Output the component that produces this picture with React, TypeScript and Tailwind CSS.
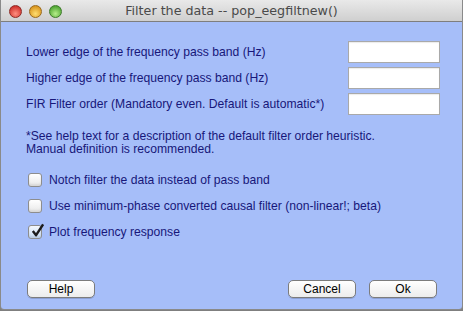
import { useState } from "react";

function TrafficLight({ from, to, ring }: { from: string; to: string; ring: string }) {
  return (
    <span
      className="block h-[13px] w-[13px] rounded-full border"
      style={{ background: `radial-gradient(circle at 50% 70%, ${to} 0%, ${from} 90%)`, borderColor: ring }}
    />
  );
}

function Field({ label }: { label: string }) {
  return (
    <div className="flex h-[22px] items-center justify-between">
      <span>{label}</span>
      <input className="h-[22px] w-[92px] border border-[#a9a9a9] bg-white shadow-[inset_0_1px_1px_rgba(0,0,0,0.08)] outline-none" />
    </div>
  );
}

function Check({ label, initial }: { label: string; initial: boolean }) {
  const [checked, setChecked] = useState(initial);
  return (
    <label className="flex h-[14px] cursor-default items-center gap-[7px]">
      <span
        onClick={() => setChecked(!checked)}
        className={
          "relative block h-[14px] w-[14px] rounded-[3px] border border-[#8d8d8d] shadow-[inset_0_-2px_2px_rgba(0,0,0,0.08)] " +
          (checked ? "bg-gradient-to-b from-[#f4f8fd] to-[#c8dcf4]" : "bg-gradient-to-b from-white to-[#e8e8e8]")
        }
      >
        {checked ? (
          <svg viewBox="0 0 16 16" className="absolute left-[1px] top-[-3px] h-[15px] w-[15px]">
            <path d="M3 8.5 L6.5 13 L14 1.5" fill="none" stroke="#1c1c1c" strokeWidth="2.6" strokeLinejoin="round" />
          </svg>
        ) : null}
      </span>
      <span>{label}</span>
    </label>
  );
}

function Button({ label }: { label: string }) {
  return (
    <button className="h-[18px] w-[68px] rounded-[5px] border border-[#7c7c7c] bg-gradient-to-b from-white to-[#ececec] text-[12px] leading-[16px] text-black shadow-[0_1px_0_rgba(0,0,0,0.15)]">
      {label}
    </button>
  );
}

export default function App() {
  return (
    <div className="h-[311px] w-[463px] bg-[#7f7f7f] font-['Liberation_Sans',Arial,sans-serif]">
      <div className="flex h-[310px] w-[463px] flex-col overflow-hidden rounded-b-[4px] border-x border-b border-[#8a8a8a]">
        <div className="relative flex h-[22px] shrink-0 items-center border-b border-[#7e7e7e] bg-gradient-to-b from-[#e9e9e9] to-[#cfcfcf]">
          <div className="absolute left-[8px] top-[5px] flex gap-[7px]">
            <TrafficLight from="#c8231f" to="#ff8f80" ring="#8e2a25" />
            <TrafficLight from="#d38a12" to="#ffde70" ring="#9a6a1c" />
            <TrafficLight from="#3f9a26" to="#b6ee8a" ring="#3e7a2a" />
          </div>
          <div className="w-full text-center font-['DejaVu_Sans',sans-serif] text-[12.7px] text-[#4a4a4a]">
            Filter the data -- pop_eegfiltnew()
          </div>
        </div>
        <div className="flex flex-1 flex-col bg-[#a6bef9] pl-[25px] pr-[22px] text-[12.15px] text-[#17177a]">
          <div className="mt-[19px] flex flex-col gap-[4px]">
            <Field label="Lower edge of the frequency pass band (Hz)" />
            <Field label="Higher edge of the frequency pass band (Hz)" />
            <Field label="FIR Filter order (Mandatory even. Default is automatic*)" />
          </div>
          <div className="mt-[15px] leading-[13px]">
            <div>*See help text for a description of the default filter order heuristic.</div>
            <div>Manual definition is recommended.</div>
          </div>
          <div className="mt-[17px] flex flex-col gap-[12px] pl-[2px]">
            <Check label="Notch filter the data instead of pass band" initial={false} />
            <Check label="Use minimum-phase converted causal filter (non-linear!; beta)" initial={false} />
            <Check label="Plot frequency response" initial={true} />
          </div>
          <div className="mt-[41px] flex items-center pl-[1px] pr-[3px]">
            <Button label="Help" />
            <div className="flex-1" />
            <Button label="Cancel" />
            <div className="w-[13px]" />
            <Button label="Ok" />
          </div>
        </div>
      </div>
    </div>
  );
}
